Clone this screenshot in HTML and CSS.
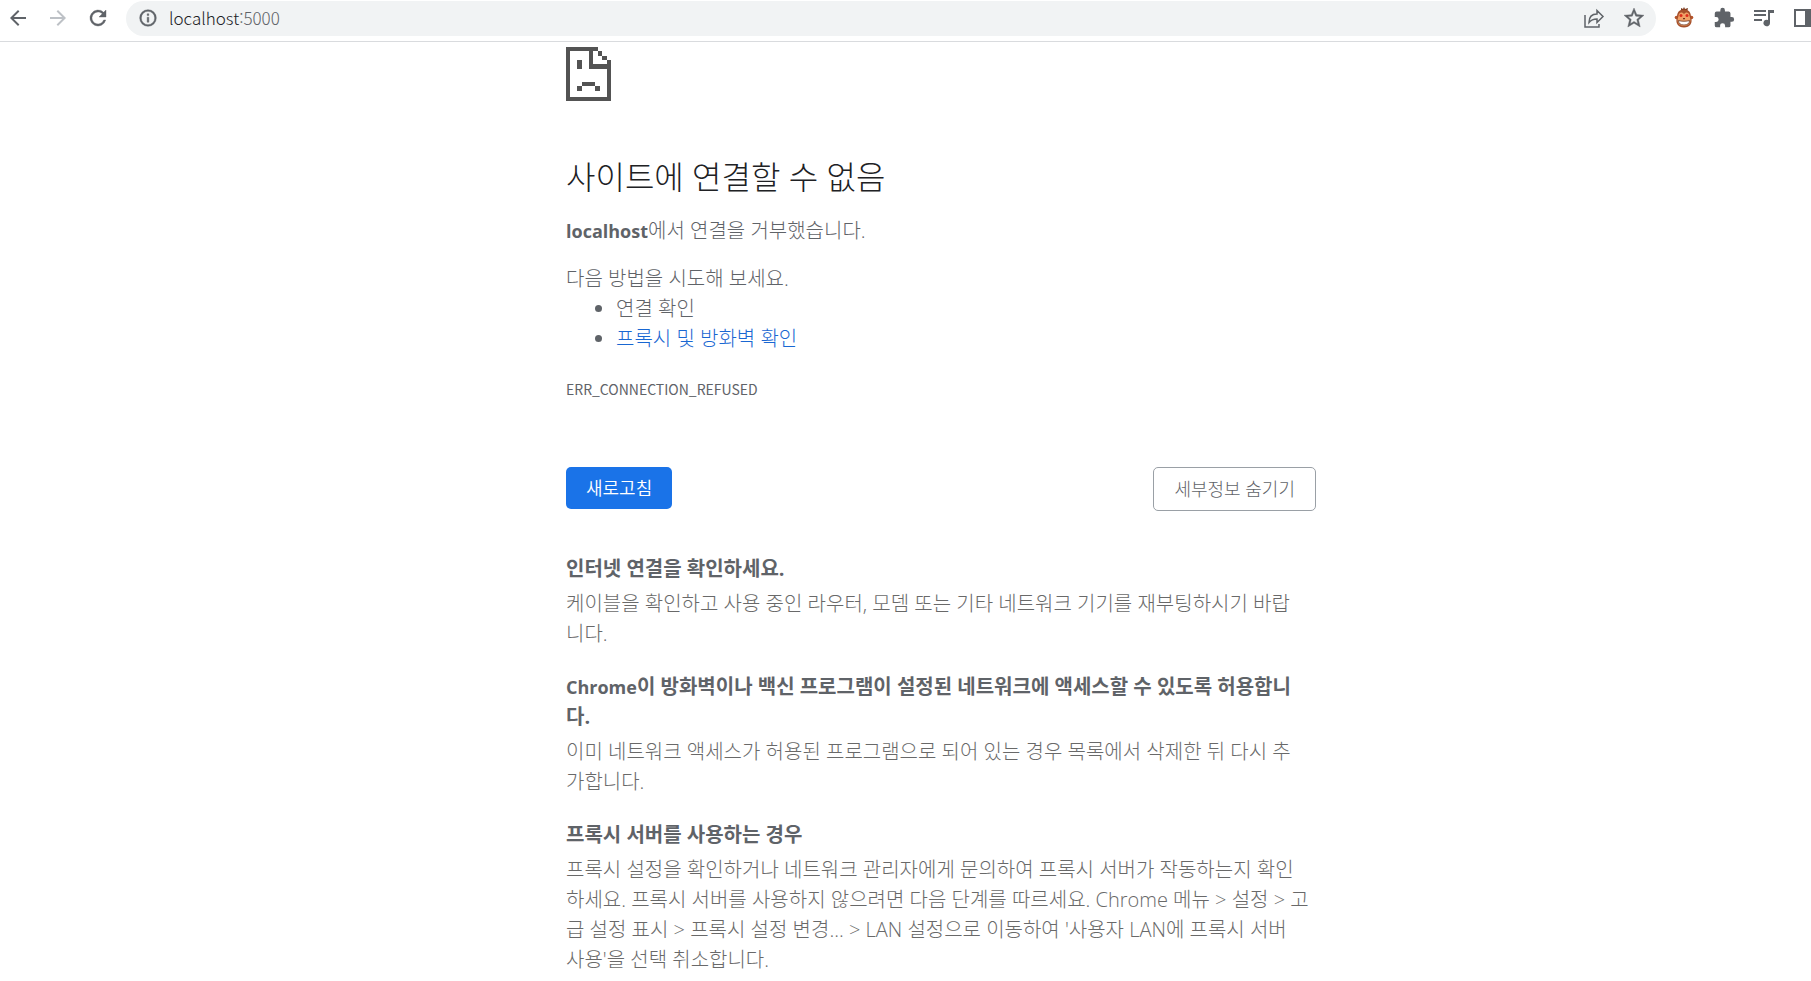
FILE: index.html
```
<!DOCTYPE html>
<html lang="ko">
<head>
  <meta charset="UTF-8">
  <meta name="viewport" content="width=device-width, initial-scale=1.0">
  <title>localhost</title>
  <link rel="stylesheet" href="styles.css">
</head>
<body>
<header class="toolbar">
  <button class="tool" aria-label="뒤로">
    <svg viewBox="0 0 24 24"><path d="M20 11H7.8l5.600-5.600L12 4l-8 8 8 8 1.400-1.400L7.800 13H20z"/></svg>
  </button>
  <button class="tool off" aria-label="앞으로" disabled>
    <svg viewBox="0 0 24 24"><path d="M4 11h12.200l-5.600-5.600L12 4l8 8-8 8-1.400-1.400 5.600-5.600H4z"/></svg>
  </button>
  <button class="tool" aria-label="새로고침">
    <svg viewBox="0 0 24 24"><path d="M17.650 6.350A8 8 0 1 0 19.730 14h-2.080A6 6 0 1 1 12 6c1.660 0 3.140.690 4.220 1.780L13 11h7V4z" stroke="currentColor" stroke-width=".4"/></svg>
  </button>
  <div class="omnibox">
    <svg class="info" viewBox="0 0 24 24"><path d="M11 17h2v-6h-2zm0-8h2V7h-2zm1-7a10 10 0 1 0 0 20 10 10 0 0 0 0-20zm0 18a8 8 0 1 1 0-16 8 8 0 0 1 0 16z"/></svg>
    <div class="url">localhost<span>:5000</span></div>
    <button class="tool" aria-label="공유">
      <svg viewBox="0 0 24 24" class="line"><path d="M3 9v12h14v-3M7 16.500c0-5.500 3-8.500 8-8.500V4.500l6 6-6 6V13c-4 0-6 1-8 3.500z"/></svg>
    </button>
    <button class="tool" aria-label="북마크">
      <svg viewBox="0 0 24 24"><path d="M22 9.240l-7.190-.620L12 2 9.190 8.630 2 9.240l5.460 4.730L5.820 21 12 17.270 18.180 21l-1.630-7.030zM12 15.400l-3.760 2.270 1-4.280-3.320-2.880 4.380-.380L12 6.100l1.710 4.040 4.380.380-3.320 2.880 1 4.280z" stroke="currentColor" stroke-width=".4"/></svg>
    </button>
  </div>
  <div class="extensions">
    <button class="tool" aria-label="확장 프로그램">
      <svg viewBox="0 0 24 24">
        <path d="M9 2l2 1 1-2 1 2 3-1-1 4H9z" fill="#7a3a1e"/>
        <circle cx="4.500" cy="11.500" r="1.800" fill="#b5542b"/><circle cx="19.500" cy="11.500" r="1.800" fill="#b5542b"/>
        <path d="M12 3.500c5 0 7 3 7 7.500 2 6-1 10.500-7 10.500S3 17 5 11c0-4.500 2-7.500 7-7.500z" fill="#a5502b"/>
        <path d="M12 8c2-3 5.500-1.500 5.500 2 2.500 6-.500 10-5.500 10S4 16 6.500 10c0-3.500 3.500-5 5.500-2z" fill="#f0a066"/>
        <circle cx="9" cy="9.500" r="1.500" fill="#dc2b1c"/><circle cx="15" cy="9.500" r="1.500" fill="#dc2b1c"/>
        <path d="M11 12h2v1.200h-2z" fill="#6b3520"/>
        <path d="M6.500 14.500c3 1 8 1 11 0 0 3-2 4.500-5.500 4.500s-5.500-1.500-5.500-4.500z" fill="#fff" stroke="#6b3520" stroke-width=".8"/>
      </svg>
    </button>
    <button class="tool" aria-label="확장 프로그램 관리">
      <svg viewBox="-1 -1 26 26"><path d="M20.500 11H19V7a2 2 0 0 0-2-2h-4V3.500a2.500 2.500 0 0 0-5 0V5H4a2 2 0 0 0-2 2v3.800h1.500a2.700 2.700 0 0 1 0 5.400H2V20a2 2 0 0 0 2 2h3.800v-1.500a2.700 2.700 0 0 1 5.400 0V22H17a2 2 0 0 0 2-2v-4h1.500a2.500 2.500 0 0 0 0-5z"/></svg>
    </button>
    <button class="tool" aria-label="미디어 제어">
      <svg viewBox="0 0 24 24"><path d="M2 4h12v2H2zm0 4h12v2H2zm0 5h8v2H2zM16 4h6v3h-4v10a3.300 3.300 0 1 1-2-3z"/></svg>
    </button>
    <button class="tool" aria-label="측면 패널">
      <svg viewBox="0 0 24 24"><path d="M2 3h20v18H2zm2 2v14h9V5z" fill-rule="evenodd"/></svg>
    </button>
  </div>
</header>

<main>
  <div class="error-page">
    <svg class="sad-page" viewBox="0 0 45 54" shape-rendering="crispEdges">
      <path d="M0 0h32v4h-5v13h14v-4h4v41H0zM4 4v46h37V22H23V4z" fill-rule="evenodd"/>
      <path d="M32 4h4v5h-4zM36 9h5v4h-5zM11 13h5v9h-5zM16 35h13v4H16zM11 39h5v5h-5zM29 39h5v5h-5z"/>
    </svg>
    <h1>사이트에 연결할 수 없음</h1>
    <p><strong>localhost</strong>에서 연결을 거부했습니다.</p>
    <div class="suggestions">
      <p>다음 방법을 시도해 보세요.</p>
      <ul>
        <li>연결 확인</li>
        <li><a href="#proxy">프록시 및 방화벽 확인</a></li>
      </ul>
    </div>
    <div class="error-code">ERR_CONNECTION_REFUSED</div>
    <div class="buttons">
      <button class="btn reload">새로고침</button>
      <button class="btn details-btn">세부정보 숨기기</button>
    </div>
    <div class="details">
      <h2>인터넷 연결을 확인하세요.</h2>
      <p>케이블을 확인하고 사용 중인 라우터, 모뎀 또는 기타 네트워크 기기를 재부팅하시기 바랍<br>니다.</p>
      <h2><strong>Chrome</strong>이 방화벽이나 백신 프로그램이 설정된 네트워크에 액세스할 수 있도록 허용합니<br>다.</h2>
      <p>이미 네트워크 액세스가 허용된 프로그램으로 되어 있는 경우 목록에서 삭제한 뒤 다시 추<br>가합니다.</p>
      <h2 id="proxy">프록시 서버를 사용하는 경우</h2>
      <p>프록시 설정을 확인하거나 네트워크 관리자에게 문의하여 프록시 서버가 작동하는지 확인<br>하세요. 프록시 서버를 사용하지 않으려면 다음 단계를 따르세요. Chrome 메뉴 &gt; 설정 &gt; 고<br>급 설정 표시 &gt; 프록시 설정 변경... &gt; LAN 설정으로 이동하여 '사용자 LAN에 프록시 서버<br>사용'을 선택 취소합니다.</p>
    </div>
  </div>
</main>
</body>
</html>
```
FILE: styles.css
```
* {
  box-sizing: border-box;
}

body {
  margin: 0;
  background: #fff;
  color: #5f6368;
  font-family: "Open Sans", "Noto Sans CJK KR", sans-serif;
  font-size: 20px;
  font-weight: 300;
  line-height: 30px;
  overflow-x: hidden;
}

button {
  padding: 0;
  border: none;
  background: none;
  font-family: inherit;
  font-weight: inherit;
}

h1, h2, p, ul {
  margin: 0;
}

/* toolbar */
.toolbar {
  display: flex;
  align-items: center;
  height: 42px;
  padding: 0 0 5px 6px;
  border-bottom: 1px solid #d9dbde;
}

.tool {
  flex: none;
  width: 24px;
  height: 24px;
  margin-right: 16px;
  color: #5f6368;
}

.tool svg {
  display: block;
  width: 100%;
  height: 100%;
  fill: currentColor;
}

.tool svg.line {
  fill: none;
  stroke: currentColor;
  stroke-width: 1.5;
}

.tool.off {
  color: #bdc1c6;
}

.omnibox {
  flex: 1;
  display: flex;
  align-items: center;
  height: 35px;
  padding-left: 12px;
  border-radius: 18px;
  background: #f1f3f4;
}

.omnibox .tool:last-child {
  margin-right: 10px;
}

.info {
  width: 20px;
  height: 20px;
  fill: #5f6368;
  stroke: #5f6368;
  stroke-width: .5;
}

.url {
  flex: 1;
  margin-left: 11px;
  color: #202124;
  font-family: "Noto Sans CJK KR", sans-serif;
  font-size: 17px;
}

.url span {
  color: #5f6368;
}

.extensions {
  display: flex;
  margin-left: 16px;
  margin-right: -21px;
}

/* error page */
main {
  padding: 5px 0 0 71px;
}

.error-page {
  max-width: 750px;
  margin: 0 auto;
}

.sad-page {
  display: block;
  width: 45px;
  height: 54px;
  fill: #535353;
}

h1 {
  margin: 57px 0 20px;
  color: #202124;
  font-size: 32px;
  font-weight: 300;
  line-height: 38px;
}

strong, h2 {
  font-weight: 700;
}

strong {
  font-size: 18px;
  line-height: 1;
}

.suggestions {
  margin-top: 18px;
}

ul {
  padding-left: 50px;
}

a {
  color: #1967d2;
  text-decoration: none;
}

.error-code {
  margin-top: 23px;
  font-family: "Noto Sans CJK KR", sans-serif;
  font-size: 14px;
  font-weight: 400;
  line-height: 24px;
}

.buttons {
  display: flex;
  justify-content: space-between;
  align-items: flex-start;
  margin-top: 66px;
}

.btn {
  padding: 0 20px;
  border-radius: 5px;
  font-size: 18px;
  font-weight: 350;
  line-height: 42px;
}

.reload {
  background: #1a73e8;
  color: #fff;
}

.details-btn {
  border: 1px solid #9aa0a6;
  color: #5f6368;
  font-weight: 300;
}

.details {
  margin-top: 43px;
  color: #696969;
}

h2 {
  margin-bottom: 5px;
  color: #5f6368;
  font-size: 20px;
}

.details p {
  margin-bottom: 23px;
}

.details p:last-child {
  margin-bottom: 0;
}
```
